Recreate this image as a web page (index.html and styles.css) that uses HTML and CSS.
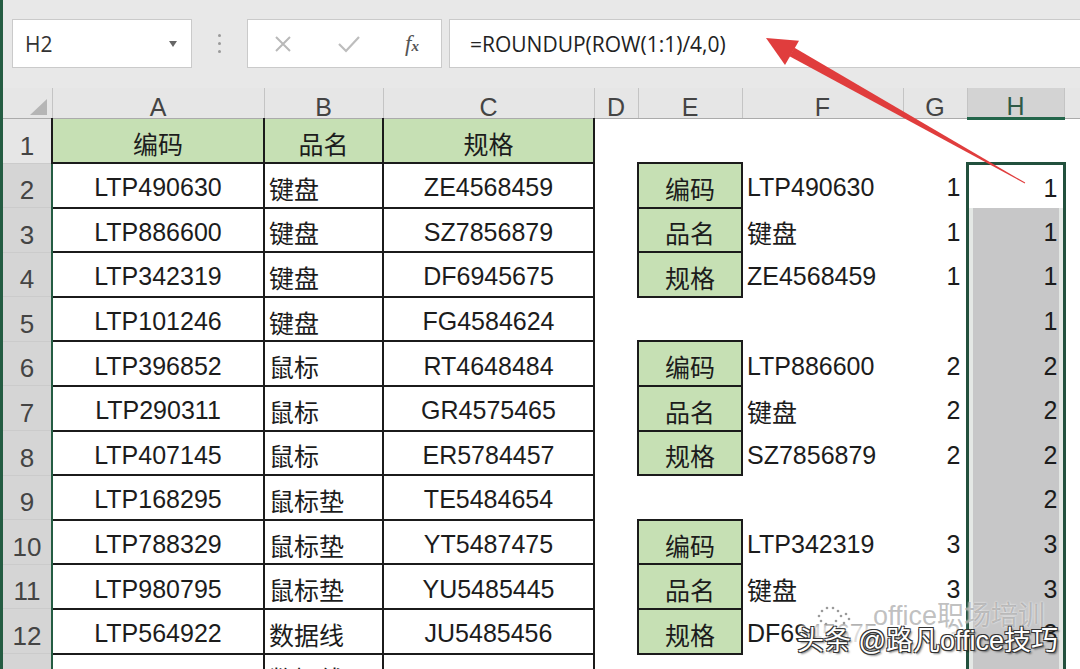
FILE: index.html
```html
<!DOCTYPE html>
<html lang="zh-CN">
  <head>
    <meta charset="UTF-8" />
    <meta name="viewport" content="width=device-width, initial-scale=1.0" />
    <title>ROUNDUP</title>
    <link rel="stylesheet" href="styles.css">
  </head>
  <body>
    <div class="window">
      <div class="formula-bar">
        <div class="name-box">
          <span>H2</span>
          <span class="drop"></span>
        </div>
        <div class="grip"><i></i><i></i><i></i></div>
        <div class="fx-box">
          <svg width="18" height="18" viewBox="0 0 18 18">
            <path d="M2 2 L16 16 M16 2 L2 16" stroke="#b9b9b9" stroke-width="2" fill="none" />
          </svg>
          <svg width="22" height="18" viewBox="0 0 22 18">
            <path d="M1 9 L8 16 L21 2" stroke="#bdbdbd" stroke-width="2.2" fill="none" />
          </svg>
          <span class="fx">f<span>x</span></span>
        </div>
        <div class="formula">=ROUNDUP(ROW(1:1)/4,0)</div>
      </div>

      <table class="sheet">
        <colgroup>
          <col style="width: 49px" />
          <col style="width: 212px" />
          <col style="width: 119px" />
          <col style="width: 211px" />
          <col style="width: 44px" />
          <col style="width: 104px" />
          <col style="width: 161px" />
          <col style="width: 64px" />
          <col style="width: 97px" />
          <col style="width: 16px" />
        </colgroup>
        <thead>
          <tr>
            <th class="corner">
              <svg width="48" height="29" viewBox="0 0 48 29">
                <polygon points="44,11 44,27 27,27" fill="#b5b5b5" />
              </svg>
            </th>
            <th>A</th>
            <th>B</th>
            <th>C</th>
            <th>D</th>
            <th>E</th>
            <th>F</th>
            <th>G</th>
            <th class="picked-col">H</th>
            <th></th>
          </tr>
        </thead>
        <tbody>
          <tr class="first">
            <th>1</th>
            <td class="box hd">编码</td>
            <td class="box hd">品名</td>
            <td class="box hd">规格</td>
            <td></td><td></td><td></td><td></td><td></td><td></td>
          </tr>
          <tr class="pick">
            <th>2</th>
            <td class="box mid">LTP490630</td>
            <td class="box left">键盘</td>
            <td class="box mid">ZE4568459</td>
            <td></td>
            <td class="box lbl">编码</td>
            <td class="f">LTP490630</td>
            <td class="g">1</td>
            <td class="h active">1</td>
            <td></td>
          </tr>
          <tr class="pick">
            <th>3</th>
            <td class="box mid">LTP886600</td>
            <td class="box left">键盘</td>
            <td class="box mid">SZ7856879</td>
            <td></td>
            <td class="box lbl">品名</td>
            <td class="f">键盘</td>
            <td class="g">1</td>
            <td class="h">1</td>
            <td></td>
          </tr>
          <tr class="pick">
            <th>4</th>
            <td class="box mid">LTP342319</td>
            <td class="box left">键盘</td>
            <td class="box mid">DF6945675</td>
            <td></td>
            <td class="box lbl">规格</td>
            <td class="f">ZE4568459</td>
            <td class="g">1</td>
            <td class="h">1</td>
            <td></td>
          </tr>
          <tr class="pick">
            <th>5</th>
            <td class="box mid">LTP101246</td>
            <td class="box left">键盘</td>
            <td class="box mid">FG4584624</td>
            <td></td><td></td><td></td><td></td>
            <td class="h">1</td>
            <td></td>
          </tr>
          <tr class="pick">
            <th>6</th>
            <td class="box mid">LTP396852</td>
            <td class="box left">鼠标</td>
            <td class="box mid">RT4648484</td>
            <td></td>
            <td class="box lbl">编码</td>
            <td class="f">LTP886600</td>
            <td class="g">2</td>
            <td class="h">2</td>
            <td></td>
          </tr>
          <tr class="pick">
            <th>7</th>
            <td class="box mid">LTP290311</td>
            <td class="box left">鼠标</td>
            <td class="box mid">GR4575465</td>
            <td></td>
            <td class="box lbl">品名</td>
            <td class="f">键盘</td>
            <td class="g">2</td>
            <td class="h">2</td>
            <td></td>
          </tr>
          <tr class="pick">
            <th>8</th>
            <td class="box mid">LTP407145</td>
            <td class="box left">鼠标</td>
            <td class="box mid">ER5784457</td>
            <td></td>
            <td class="box lbl">规格</td>
            <td class="f">SZ7856879</td>
            <td class="g">2</td>
            <td class="h">2</td>
            <td></td>
          </tr>
          <tr class="pick">
            <th>9</th>
            <td class="box mid">LTP168295</td>
            <td class="box left">鼠标垫</td>
            <td class="box mid">TE5484654</td>
            <td></td><td></td><td></td><td></td>
            <td class="h">2</td>
            <td></td>
          </tr>
          <tr class="pick">
            <th>10</th>
            <td class="box mid">LTP788329</td>
            <td class="box left">鼠标垫</td>
            <td class="box mid">YT5487475</td>
            <td></td>
            <td class="box lbl">编码</td>
            <td class="f">LTP342319</td>
            <td class="g">3</td>
            <td class="h">3</td>
            <td></td>
          </tr>
          <tr class="pick">
            <th>11</th>
            <td class="box mid">LTP980795</td>
            <td class="box left">鼠标垫</td>
            <td class="box mid">YU5485445</td>
            <td></td>
            <td class="box lbl">品名</td>
            <td class="f">键盘</td>
            <td class="g">3</td>
            <td class="h">3</td>
            <td></td>
          </tr>
          <tr class="pick">
            <th>12</th>
            <td class="box mid">LTP564922</td>
            <td class="box left">数据线</td>
            <td class="box mid">JU5485456</td>
            <td></td>
            <td class="box lbl">规格</td>
            <td class="f">DF6945675</td>
            <td class="g">3</td>
            <td class="h">3</td>
            <td></td>
          </tr>
          <tr class="pick">
            <th>13</th>
            <td class="box mid"></td>
            <td class="box left">数据线</td>
            <td class="box mid"></td>
            <td></td><td></td><td></td><td></td>
            <td class="h">3</td>
            <td></td>
          </tr>
        </tbody>
      </table>

      <!-- red arrow pointing at the formula -->
      <svg class="arrow" width="1080" height="669" viewBox="0 0 1080 669">
        <polygon points="789.5,56.3 794.5,47.7 1025.2,182.6 1024.8,183.4" fill="#e03d3d" />
        <polygon points="766,38 799,40.8 785,65" fill="#e03d3d" />
      </svg>

      <!-- burned-in watermark of the source article -->
      <div class="mark-haze"></div>
      <div class="mark-top">
        <svg width="40" height="24" viewBox="0 0 40 24">
          <g fill="#9a9a9a">
            <circle cx="6" cy="14" r="1.3" /><circle cx="9" cy="9" r="1.3" />
            <circle cx="14" cy="6" r="1.3" /><circle cx="20" cy="6" r="1.3" />
            <circle cx="25" cy="9" r="1.3" /><circle cx="8" cy="19" r="1.3" />
            <circle cx="13" cy="22" r="1.3" /><circle cx="28" cy="14" r="1.3" />
            <circle cx="33" cy="12" r="1.3" /><circle cx="36" cy="17" r="1.3" />
            <circle cx="31" cy="21" r="1.3" /><circle cx="23" cy="19" r="1.3" />
          </g>
        </svg>
        <span>office职场培训</span>
      </div>
      <div class="mark-bottom">头条 @路凡office技巧</div>
    </div>
  </body>
</html>
```

FILE: styles.css
```css
* {
  margin: 0;
  padding: 0;
  box-sizing: border-box;
}

body {
  width: 1080px;
  height: 669px;
  overflow: hidden;
  background-color: #fff;
  font-family: "Liberation Sans", "Noto Sans CJK SC", sans-serif;
}

.window {
  position: relative;
  height: 669px;
  overflow: hidden;
  border-left: 3px solid #245c42;
}

/* formula bar */

.formula-bar {
  display: flex;
  height: 88px;
  padding: 19px 0 20px 9px;
  background-color: #e8e8e8;
  font-family: "Open Sans", "Liberation Sans", sans-serif;
}

.name-box {
  width: 180px;
  display: flex;
  align-items: center;
  justify-content: space-between;
  padding: 0 14px 0 12px;
  background-color: #fff;
  border: 1px solid #cacaca;
  font-size: 21px;
  color: #333;
}

.drop {
  width: 0;
  height: 0;
  border-left: 4px solid transparent;
  border-right: 4px solid transparent;
  border-top: 6px solid #666;
}

.grip {
  width: 55px;
  display: flex;
  flex-direction: column;
  align-items: center;
  justify-content: center;
  gap: 5px;
}

.grip i {
  width: 3px;
  height: 3px;
  border-radius: 50%;
  background-color: #9a9a9a;
}

.fx-box {
  width: 195px;
  display: flex;
  align-items: center;
  padding: 0 22px 0 26px;
  justify-content: space-between;
  background-color: #fff;
  border: 1px solid #cacaca;
}

.fx {
  font-family: "Liberation Serif", serif;
  font-style: italic;
  font-size: 23px;
  color: #555;
}

.fx span {
  font-size: 15px;
  font-weight: bold;
}

.formula {
  flex: 1;
  margin-left: 7px;
  margin-right: -2px;
  display: flex;
  align-items: center;
  padding-left: 20px;
  background-color: #fff;
  border: 1px solid #cacaca;
  font-size: 21px;
  color: #222;
}

/* grid */

.sheet {
  width: 1077px;
  table-layout: fixed;
  border-collapse: collapse;
}

.sheet thead th {
  height: 30px;
  background-color: #e6e6e6;
  border-right: 1px solid #c4c4c4;
  border-bottom: 1px solid #ababab;
  font-weight: normal;
  font-size: 25px;
  line-height: 22px;
  color: #444;
  vertical-align: bottom;
  text-align: center;
}

.sheet thead th.corner {
  padding: 0;
  vertical-align: top;
}

.corner svg {
  display: block;
}

.sheet thead th.picked-col {
  background-color: #d3d3d3;
  color: #2f5a47;
  border-bottom: 3px solid #23654a;
}

.sheet tbody tr {
  height: 44.6px;
}

.sheet tbody tr.first {
  height: 45px;
}

.sheet tbody th {
  background-color: #e6e6e6;
  border-right: 1px solid #ababab;
  border-bottom: 1px solid #cbcbcb;
  font-weight: normal;
  font-size: 26px;
  line-height: 30px;
  color: #444;
  text-align: center;
  vertical-align: bottom;
  padding-bottom: 2px;
}

.sheet tbody tr.pick th {
  background-color: #d5d5d5;
  border-right: 2px solid #245c42;
}

.sheet td {
  font-size: 25px;
  color: #1c1c1c;
  white-space: nowrap;
  overflow: hidden;
  vertical-align: middle;
  padding-top: 5px;
}

.sheet td.box {
  border: 2px solid #1b1b1b;
}

.sheet td.hd {
  border-top: none;
  background-color: #c6e0b4;
  text-align: center;
}

.sheet td.mid {
  text-align: center;
}

.sheet td.left {
  padding-left: 4px;
}

.sheet td.lbl {
  background-color: #c6e0b4;
  text-align: center;
}

.sheet td.f {
  padding-left: 4px;
}

.sheet td.g {
  text-align: right;
  padding-right: 5px;
}

.sheet td.h {
  text-align: right;
  padding-right: 5px;
  background-color: #c7c7c8;
  box-shadow: inset 4px 0 #e4e8e5, inset -4px 0 #e4e8e5;
  border-left: 3px solid #22503d;
  border-right: 3px solid #22503d;
}

.sheet td.h.active {
  background-color: #fff;
  box-shadow: none;
  border-top: 3px solid #22503d;
}

/* overlays */

.arrow {
  position: absolute;
  top: 0;
  left: -3px;
  pointer-events: none;
}

.mark-haze {
  position: absolute;
  left: 800px;
  top: 622px;
  width: 160px;
  height: 30px;
  background-color: rgba(255, 255, 255, 0.85);
  filter: blur(3px);
  pointer-events: none;
}

.mark-top {
  position: absolute;
  left: 810px;
  top: 594px;
  display: flex;
  align-items: center;
  gap: 20px;
  font-size: 27px;
  color: rgba(140, 140, 140, 0.55);
  text-shadow: 0 0 2px #fff;
  pointer-events: none;
}

.mark-bottom {
  position: absolute;
  left: 794px;
  top: 619px;
  font-size: 27px;
  color: #fff;
  white-space: pre;
  text-shadow: 1px 1px 0 #333, -1px -1px 0 #333, 1px -1px 0 #333, -1px 1px 0 #333,
    2px 2px 2px rgba(0, 0, 0, 0.5);
  pointer-events: none;
}
```
